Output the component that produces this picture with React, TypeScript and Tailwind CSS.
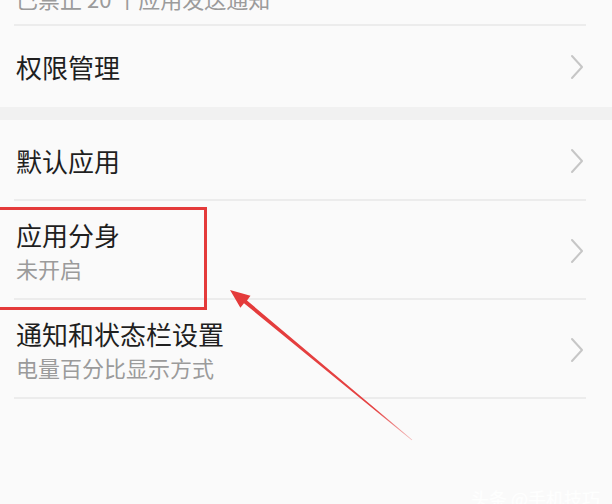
import React from 'react';

const font = { fontFamily: '"Noto Sans CJK SC", "Noto Sans", sans-serif' };

const Chevron = () => (
  <svg width="14" height="26" viewBox="0 0 14 26" className="shrink-0">
    <path d="M2 2 L12 13 L2 24" fill="none" stroke="#c6c6c6" strokeWidth="2" strokeLinecap="round" strokeLinejoin="round" />
  </svg>
);

interface RowProps {
  title: string;
  subtitle?: string;
  height: string;
  divider?: boolean;
}

const Row: React.FC<RowProps> = ({ title, subtitle, height, divider = true }) => (
  <div className={`relative flex items-center pl-4 pr-[28px] ${height}`}>
    <div className="flex-1 flex flex-col">
      <span className="text-[26px] leading-[34px] text-[#1f1f1f]">{title}</span>
      {subtitle && (
        <span className="text-[22px] leading-[32px] text-[#9b9b9b]">{subtitle}</span>
      )}
    </div>
    <Chevron />
    {divider && <div className="absolute bottom-0 left-[14px] right-[26px] h-[2px] bg-[#ececec]" />}
  </div>
);

export default function App() {
  return (
    <div className="relative w-[612px] h-[504px] overflow-hidden bg-[#fafafa]" style={font}>
      {/* cut-off row above */}
      <div className="relative h-[26px] flex flex-col justify-end pl-4 pb-[14px]">
        <span className="text-[22px] leading-[28px] text-[#9b9b9b] whitespace-nowrap">已禁止 20 个应用发送通知</span>
        <div className="absolute bottom-0 left-[14px] right-[26px] h-[2px] bg-[#ececec]" />
      </div>

      <Row title="权限管理" height="h-[81px]" divider={false} />

      <div className="h-[13px] bg-[#f1f1f1]" />

      <Row title="默认应用" height="h-[81px]" />
      <Row title="应用分身" subtitle="未开启" height="h-[99px]" />
      <Row title="通知和状态栏设置" subtitle="电量百分比显示方式" height="h-[99px]" />

      {/* highlight box */}
      <div className="absolute left-[-4px] top-[207px] w-[211px] h-[103px] border-[3px] border-[#e43a3a]" />

      {/* arrow */}
      <svg className="absolute left-0 top-0" width="612" height="504" viewBox="0 0 612 504">
        <defs>
          <linearGradient id="fade" x1="230" y1="290" x2="412" y2="440" gradientUnits="userSpaceOnUse">
            <stop offset="0" stopColor="#e43a3a" stopOpacity="1" />
            <stop offset="0.8" stopColor="#e43a3a" stopOpacity="0.95" />
            <stop offset="1" stopColor="#e43a3a" stopOpacity="0.3" />
          </linearGradient>
        </defs>
        <polygon
          points="230,290 250.5,295.8 247,300.5 412.3,439.8 411.7,440.3 244,303.3 240.4,307.7"
          fill="url(#fade)"
        />
      </svg>

      {/* faint watermark */}
      <div className="absolute right-[12px] bottom-[-8px] text-[18px] text-white/90 whitespace-nowrap">头条 @手机技巧</div>
    </div>
  );
}
